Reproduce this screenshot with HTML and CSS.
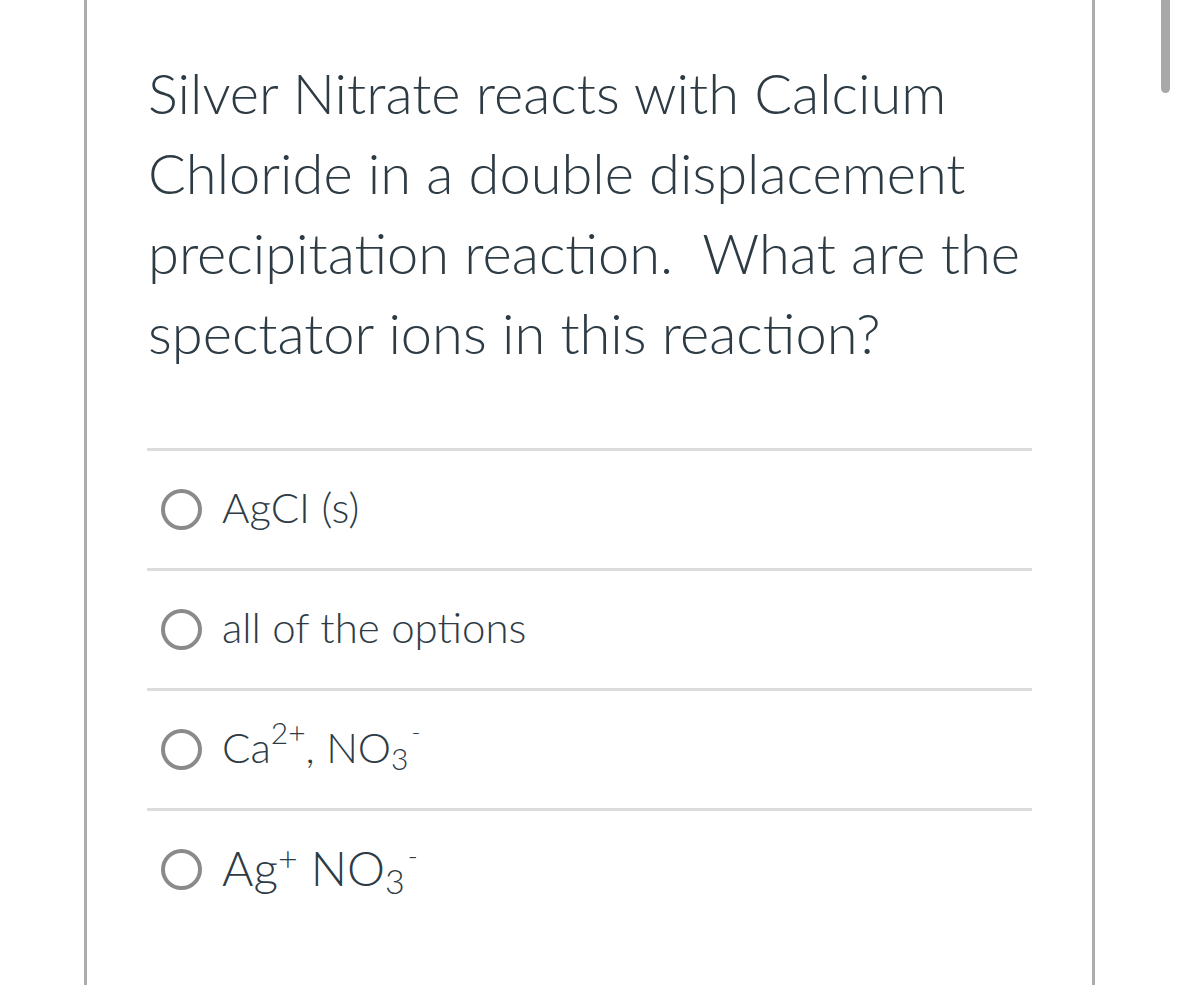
FILE: index.html
```html
<!DOCTYPE html>
<html lang="en">
<head>
<meta charset="utf-8">
<title>Question</title>
<link rel="stylesheet" href="styles.css">
</head>
<body>
<div class="page">
  <div class="question">Silver Nitrate reacts with Calcium Chloride in a double displacement precipitation reaction.&nbsp; What are the spectator ions in this reaction?</div>
  <div class="answers">
    <label class="answer"><span class="radio"></span><span class="label">AgCI (s)</span></label>
    <label class="answer"><span class="radio"></span><span class="label">all of the options</span></label>
    <label class="answer"><span class="radio"></span><span class="label">Ca<sup>2+</sup>, NO<sub>3</sub><sup class="neg">-</sup></span></label>
    <label class="answer"><span class="radio"></span><span class="label label-large">Ag<sup>+</sup> NO<sub>3</sub><sup class="neg">-</sup></span></label>
  </div>
</div>
<div class="scrollbar"></div>
</body>
</html>
```

FILE: styles.css
```css
html, body {
  margin: 0;
  padding: 0;
  background: #ffffff;
}

body {
  font-family: Lato, "Noto Sans", "Liberation Sans", sans-serif;
  font-weight: 300;
  color: #2d3b45;
  overflow: hidden;
}

.page {
  box-sizing: border-box;
  margin-left: 84px;
  width: 1011px;
  height: 985px;
  border-left: 3px solid #acacac;
  border-right: 3px solid #acacac;
  padding: 53px 60px 0 60px;
}

.question {
  font-size: 56px;
  line-height: 80px;
  padding-left: 1px;
  margin-bottom: 75px;
}

.answers {
  display: flex;
  flex-direction: column;
}

.answer {
  display: flex;
  align-items: center;
  box-sizing: border-box;
  height: 120px;
  border-top: 3px solid #dcdcdc;
  padding-left: 14px;
}

.radio {
  box-sizing: border-box;
  width: 41px;
  height: 41px;
  border: 4.5px solid #8a8a8a;
  border-radius: 50%;
  flex: none;
}

.label {
  margin-left: 20px;
  margin-bottom: 6px;
  font-size: 42px;
  line-height: 50px;
}

.label sup,
.label sub {
  font-size: 30px;
  line-height: 0;
}

.label sup {
  vertical-align: 19px;
}

.label sub {
  vertical-align: -7px;
}

.label sup.neg {
  font-size: 24px;
  margin-left: 3px;
  vertical-align: 22px;
}

.label-large {
  font-size: 48px;
  line-height: 56px;
  margin-bottom: 4px;
}

.label-large sup,
.label-large sub {
  font-size: 34px;
}

.label-large sup {
  vertical-align: 15px;
}

.label-large sub {
  vertical-align: -8px;
}

.label-large sup.neg {
  font-size: 27px;
  vertical-align: 20px;
}

.scrollbar {
  position: absolute;
  top: -10px;
  left: 1161px;
  width: 9px;
  height: 103px;
  border-radius: 5px;
  background: #a8a8a8;
}
```
